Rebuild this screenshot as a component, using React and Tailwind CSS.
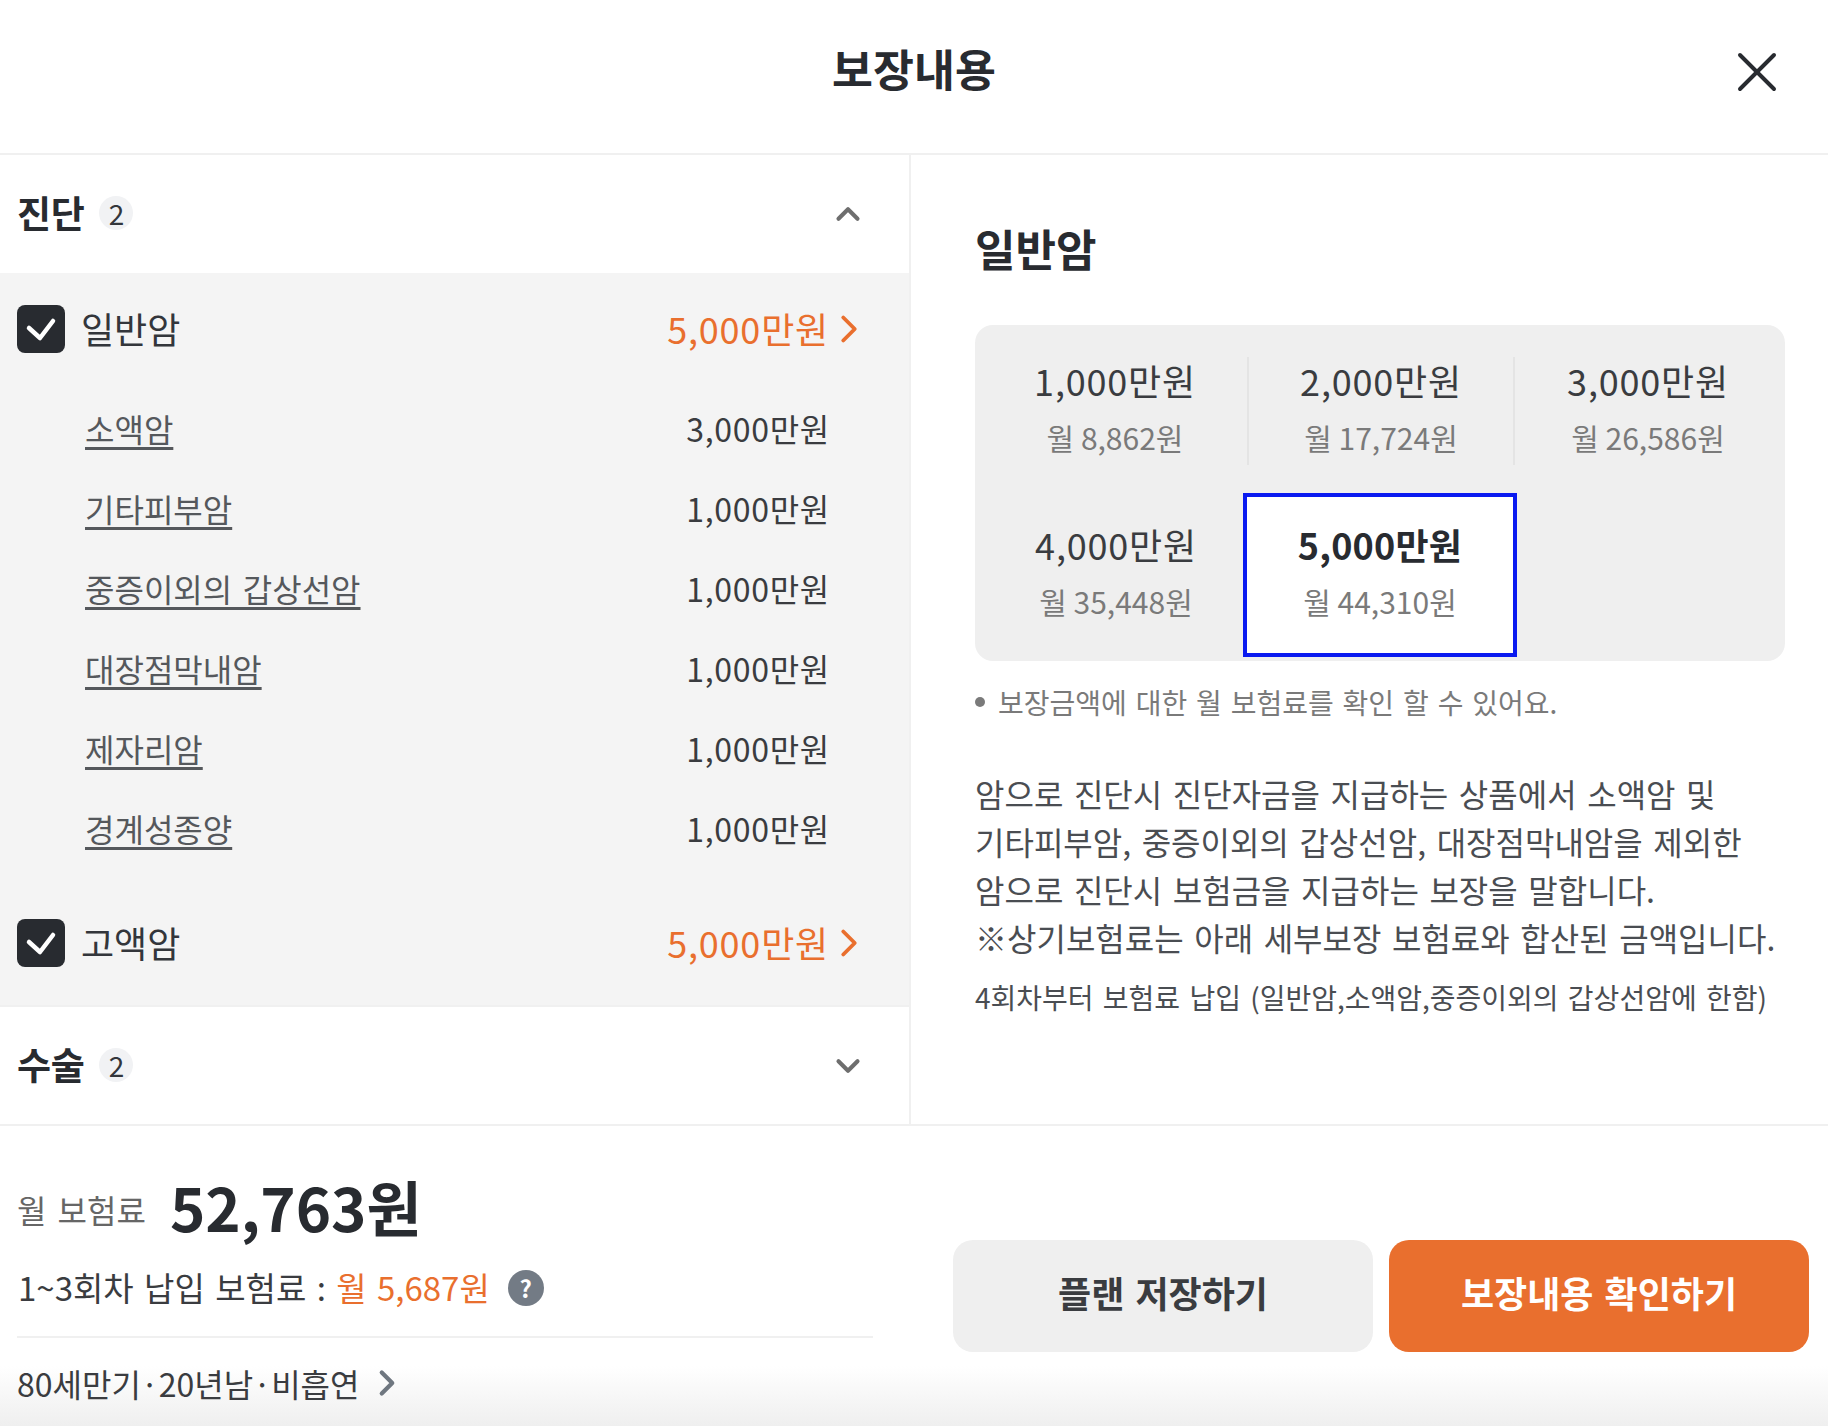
import { X, ChevronUp, ChevronDown, ChevronRight } from 'lucide-react';

const subItems = [
  ['소액암', '3,000만원'],
  ['기타피부암', '1,000만원'],
  ['중증이외의 갑상선암', '1,000만원'],
  ['대장점막내암', '1,000만원'],
  ['제자리암', '1,000만원'],
  ['경계성종양', '1,000만원'],
];

const options = [
  ['1,000만원', '월 8,862원'],
  ['2,000만원', '월 17,724원'],
  ['3,000만원', '월 26,586원'],
  ['4,000만원', '월 35,448원'],
  ['5,000만원', '월 44,310원'],
];

const SectionHeader = ({ title, open }) => (
  <div className="flex h-[118px] items-center justify-between pl-[17px] pr-[42px]">
    <div className="flex items-center gap-[15px] pb-[3px]">
      <span className="text-[37px] font-bold tracking-[-0.3px] text-[#282b30]">{title}</span>
      <span className="flex h-[34px] w-[34px] items-center justify-center rounded-full bg-[#f1f2f4] text-[28px] text-[#33363b]">2</span>
    </div>
    {open ? (
      <ChevronUp size={38} strokeWidth={2.6} className="text-[#6e6e6e]" />
    ) : (
      <ChevronDown size={38} strokeWidth={2.6} className="text-[#6e6e6e]" />
    )}
  </div>
);

const CoverRow = ({ name }) => (
  <div className="flex h-[112px] items-center justify-between pl-[17px] pr-[37px]">
    <div className="flex items-center gap-[16px]">
      <span className="flex h-[48px] w-[48px] items-center justify-center rounded-[8px] bg-[#282b30]">
        <svg width="48" height="48" viewBox="0 0 48 48" fill="none" stroke="white" strokeWidth="4.5" strokeLinecap="round" strokeLinejoin="round">
          <path d="M12 23 L23 33 L36 16" />
        </svg>
      </span>
      <span className="pb-[2px] text-[36px] text-[#33363b]">{name}</span>
    </div>
    <div className="flex items-center text-[36px] text-[#e96f2e]">
      <span className="pb-[2px] tracking-[0.8px]">5,000만원</span>
      <ChevronRight size={46} strokeWidth={2} className="-ml-[3px]" />
    </div>
  </div>
);

const App = () => {
  return (
    <div className="relative flex h-[1426px] flex-col overflow-hidden bg-white font-['Noto_Sans_CJK_KR',sans-serif] text-[#33363b]">
      <div className="pointer-events-none absolute bottom-0 left-0 right-0 h-[60px] bg-gradient-to-b from-white/0 to-[#efefef]" />

      <header className="relative flex h-[155px] shrink-0 items-center justify-center border-b-2 border-[#f0f0f0] pb-[16px]">
        <h1 className="text-[44.5px] font-bold text-[#282b30]">보장내용</h1>
        <X size={68} strokeWidth={1.4} className="absolute right-[37px] top-[38px] text-[#282b30]" />
      </header>

      <div className="flex h-[969px] shrink-0">
        <div className="w-[911px] shrink-0 border-r-2 border-[#f0f0f0]">
          <SectionHeader title="진단" open />
          <div className="h-[734px] border-b-2 border-[#f0f0f0] bg-[#f4f4f4]">
            <CoverRow name="일반암" />
            <ul className="mt-[4px] mb-[18px]">
              {subItems.map(([name, price]) => (
                <li key={name} className="flex h-[80px] items-center justify-between pb-[2px] pl-[85px] pr-[79px] text-[32px]">
                  <span className="text-[#55585c] underline underline-offset-[5px] [word-spacing:3.4px]">{name}</span>
                  <span className="tracking-[0.7px] text-[#3a3c40]">{price}</span>
                </li>
              ))}
            </ul>
            <CoverRow name="고액암" />
          </div>
          <SectionHeader title="수술" />
        </div>

        <div className="flex-1 pl-[64px] pr-[43px] pt-[61px]">
          <h2 className="text-[44px] font-bold leading-[64px] text-[#282b30]">일반암</h2>
          <div className="mt-[45px] grid h-[336px] grid-cols-[266px_266px_266px] grid-rows-[164px_164px] justify-center rounded-[18px] bg-[#efefef] py-[4px] pl-[4px]">
            {options.map(([amount, fee], i) => {
              const selected = i === 4;
              return (
                <div
                  key={amount}
                  className={selected ? '-ml-[6px] -mr-[2px] border-[4px] border-[#0a1af0] bg-white py-[24px]' : 'py-[28px]'}
                >
                  <div className={i < 2 ? 'flex h-[108px] flex-col items-center border-r-2 border-[#e4e4e4]' : 'flex h-[108px] flex-col items-center'}>
                    <span className={selected ? 'text-[36px] font-bold leading-[47px] tracking-[0.2px] text-[#282b30]' : 'text-[36px] leading-[47px] tracking-[0.8px] text-[#3a3c40]'}>{amount}</span>
                    <span className="mt-[6px] text-[30px] leading-[54px] text-[#7a7a7a]">{fee}</span>
                  </div>
                </div>
              );
            })}
          </div>
          <div className="mt-[20px] flex items-center gap-[13px] text-[28px] leading-[42px] text-[#7a7a7a] [word-spacing:2.6px]">
            <span className="h-[10px] w-[10px] rounded-full bg-[#7a7a7a]" />
            <span>보장금액에 대한 월 보험료를 확인 할 수 있어요.</span>
          </div>
          <p className="mt-[46px] text-[32px] leading-[48px] text-[#4a4d52] [word-spacing:3.4px]">
            암으로 진단시 진단자금을 지급하는 상품에서 소액암 및<br />
            기타피부암, 중증이외의 갑상선암, 대장점막내암을 제외한<br />
            암으로 진단시 보험금을 지급하는 보장을 말합니다.<br />
            ※상기보험료는 아래 세부보장 보험료와 합산된 금액입니다.
          </p>
          <p className="mt-[15px] text-[28px] leading-[42px] text-[#4a4d52] [word-spacing:3px]">4회차부터 보험료 납입 (일반암,소액암,중증이외의 갑상선암에 한함)</p>
        </div>
      </div>

      <footer className="relative flex flex-1 border-t-2 border-[#f0f0f0] pl-[17px] pr-[19px]">
        <div className="w-[856px] shrink-0">
          <div className="mt-[34px] flex h-[92px] items-center gap-[24px]">
            <span className="pt-[5px] text-[32px] text-[#666] [word-spacing:4px]">월 보험료</span>
            <span className="text-[60px] font-bold text-[#282b30]">52,763원</span>
          </div>
          <div className="mt-[8px] flex h-[56px] items-center pl-[1px] text-[33px] text-[#3a3c40] [word-spacing:3px]">
            <span>1~3회차 납입 보험료 :&nbsp;</span>
            <span className="text-[#e96f2e]">월 5,687원</span>
            <span className="ml-[18px] flex h-[36px] w-[36px] items-center justify-center rounded-full bg-[#737b85] text-[24px] font-bold text-white">?</span>
          </div>
          <div className="mt-[20px] border-t-2 border-[#f0f0f0]" />
          <div className="mt-[17px] flex h-[56px] items-center gap-[7px] text-[32px] text-[#3a3c40]">
            <span>80세만기·20년남·비흡연</span>
            <ChevronRight size={42} strokeWidth={2.4} className="text-[#6f7780]" />
          </div>
        </div>
        <div className="ml-[80px] mt-[114px] flex h-[112px] flex-1 gap-[16px]">
          <button className="flex-1 rounded-[20px] bg-[#efefef] pb-[8px] text-[36px] font-bold text-[#3a3c40] [word-spacing:3px]">플랜 저장하기</button>
          <button className="flex-1 rounded-[20px] bg-[#e96f2e] pb-[8px] text-[36px] font-bold text-white [word-spacing:3px]">보장내용 확인하기</button>
        </div>
      </footer>
    </div>
  );
};

export default App;
